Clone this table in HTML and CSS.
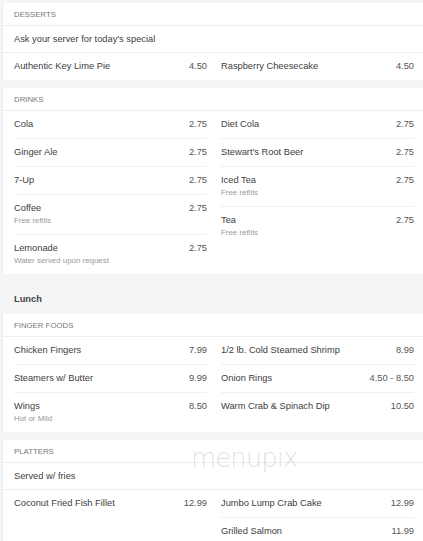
FILE: index.html
```html
<!DOCTYPE html>
<html>
<head>
    <title>Menu</title>
    <link rel="stylesheet" href="styles.css">
</head>
<body>
    <div class="menu">
        <section class="card">
            <div class="cat">Desserts</div>
            <div class="special">Ask your server for today's special</div>
            <div class="cols">
                <div class="col">
                    <div class="item"><div class="info"><div class="name">Authentic Key Lime Pie</div></div><div class="price">4.50</div></div>
                </div>
                <div class="col">
                    <div class="item"><div class="info"><div class="name">Raspberry Cheesecake</div></div><div class="price">4.50</div></div>
                </div>
            </div>
        </section>

        <section class="card">
            <div class="cat">Drinks</div>
            <div class="cols">
                <div class="col">
                    <div class="item"><div class="info"><div class="name">Cola</div></div><div class="price">2.75</div></div>
                    <div class="item"><div class="info"><div class="name">Ginger Ale</div></div><div class="price">2.75</div></div>
                    <div class="item"><div class="info"><div class="name">7-Up</div></div><div class="price">2.75</div></div>
                    <div class="item"><div class="info"><div class="name">Coffee</div><div class="desc">Free refills</div></div><div class="price">2.75</div></div>
                    <div class="item"><div class="info"><div class="name">Lemonade</div><div class="desc">Water served upon request</div></div><div class="price">2.75</div></div>
                </div>
                <div class="col">
                    <div class="item"><div class="info"><div class="name">Diet Cola</div></div><div class="price">2.75</div></div>
                    <div class="item"><div class="info"><div class="name">Stewart's Root Beer</div></div><div class="price">2.75</div></div>
                    <div class="item"><div class="info"><div class="name">Iced Tea</div><div class="desc">Free refills</div></div><div class="price">2.75</div></div>
                    <div class="item"><div class="info"><div class="name">Tea</div><div class="desc">Free refills</div></div><div class="price">2.75</div></div>
                </div>
            </div>
        </section>

        <h2 class="menu-title">Lunch</h2>

        <section class="card">
            <div class="cat">Finger Foods</div>
            <div class="cols">
                <div class="col">
                    <div class="item"><div class="info"><div class="name">Chicken Fingers</div></div><div class="price">7.99</div></div>
                    <div class="item"><div class="info"><div class="name">Steamers w/ Butter</div></div><div class="price">9.99</div></div>
                    <div class="item"><div class="info"><div class="name">Wings</div><div class="desc">Hot or Mild</div></div><div class="price">8.50</div></div>
                </div>
                <div class="col">
                    <div class="item"><div class="info"><div class="name">1/2 lb. Cold Steamed Shrimp</div></div><div class="price">8.99</div></div>
                    <div class="item"><div class="info"><div class="name">Onion Rings</div></div><div class="price">4.50 - 8.50</div></div>
                    <div class="item"><div class="info"><div class="name">Warm Crab &amp; Spinach Dip</div></div><div class="price">10.50</div></div>
                </div>
            </div>
        </section>

        <section class="card">
            <div class="cat">Platters</div>
            <div class="special">Served w/ fries</div>
            <div class="cols">
                <div class="col">
                    <div class="item"><div class="info"><div class="name">Coconut Fried Fish Fillet</div></div><div class="price">12.99</div></div>
                </div>
                <div class="col">
                    <div class="item"><div class="info"><div class="name">Jumbo Lump Crab Cake</div></div><div class="price">12.99</div></div>
                    <div class="item"><div class="info"><div class="name">Grilled Salmon</div></div><div class="price">11.99</div></div>
                </div>
            </div>
        </section>
    </div>
    <div class="watermark">menupix</div>
</body>
</html>
```

FILE: styles.css
```css
body {
    margin: 0;
    padding: 3px 0 0 0;
    background-color: #f4f5f7;
    font-family: 'Liberation Sans', Arial, sans-serif;
    color: #404040;
    overflow: hidden;
    position: relative;
}
.card {
    background-color: #fff;
    margin-left: 2px;
    border-left: 1px solid #ececec;
    margin-bottom: 8px;
}
.cat {
    padding: 6px 11px 4px;
    line-height: 12px;
    font-size: 7.8px;
    text-transform: uppercase;
    color: #777;
    border-bottom: 1px solid #eee;
}
.special {
    padding: 6.5px 11px;
    line-height: 13px;
    font-size: 9.3px;
    border-bottom: 1px solid #eee;
}
.cols {
    display: grid;
    grid-template-columns: 1fr 1fr;
    column-gap: 14px;
    padding: 0 9px 0 11px;
}
.item {
    display: flex;
    justify-content: space-between;
    align-items: flex-start;
    padding: 7px 0;
    border-bottom: 1px solid #f0f0f0;
    font-size: 9.3px;
    line-height: 13px;
}
.item:last-child {
    border-bottom: none;
}
.price {
    color: #555;
    white-space: nowrap;
}
.desc {
    font-size: 7.9px;
    line-height: 12px;
    color: #999;
}
.menu-title {
    margin: -8px 0 0 0;
    padding: 19px 14px 8px;
    font-size: 9.3px;
    line-height: 13px;
    font-weight: bold;
    color: #444;
}
.watermark {
    position: absolute;
    left: 191px;
    top: 443px;
    font-family: 'DejaVu Sans', sans-serif;
    font-weight: 200;
    font-size: 26px;
    letter-spacing: -1px;
    color: rgba(0, 0, 0, 0.14);
}
```
